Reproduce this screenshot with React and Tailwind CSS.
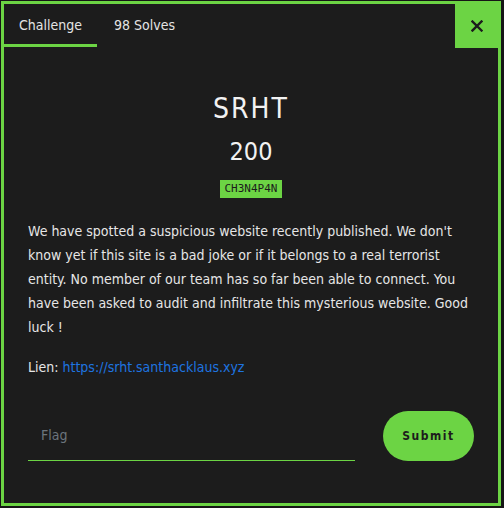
export default function App() {
  const font = { fontFamily: '"DejaVu Sans Condensed", "DejaVu Sans", sans-serif', fontStretch: "semi-condensed" };
  return (
    <div className="w-[504px] h-[508px] bg-[#161616] pl-px pt-px overflow-hidden" style={font}>
      <div className="w-[500px] h-[505px] border-[3px] border-[#6cd444] bg-[#1c1c1c] flex flex-col">
        <div className="flex h-[43px] items-stretch">
          <div className="w-[93px] border-b-[3px] border-[#6cd444] flex items-center justify-center text-[14px] text-[#e4e4e4] pt-[2px]">
            Challenge
          </div>
          <div className="ml-[10px] px-[7px] flex items-center text-[14px] text-[#e4e4e4]">98 Solves</div>
          <div className="flex-1" />
          <button className="w-[43px] h-[44px] bg-[#6cd444] flex items-center justify-center text-[#1c1c1c]">
            <svg width="12" height="12" viewBox="0 0 12 12">
              <path d="M1.5 1.5 L10.5 10.5 M10.5 1.5 L1.5 10.5" stroke="#1c1c1c" strokeWidth="2.4" strokeLinecap="square" />
            </svg>
          </button>
        </div>
        <div className="px-[24px] flex flex-col">
          <div className="mt-[44px] text-center text-[28px] leading-[36px] tracking-[2px] text-[#f2f2f2]">SRHT</div>
          <div className="mt-[8px] text-center text-[25px] leading-[34px] text-[#f2f2f2]">200</div>
          <div className="mt-[11px] flex justify-center">
            <span className="bg-[#6cd444] text-[#1c1c1c] text-[11px] leading-[18px] px-[5px] tracking-[0px]" style={{ fontFamily: '"DejaVu Sans Mono", monospace', fontStretch: "normal" }}>
              CH3N4P4N
            </span>
          </div>
          <p className="mt-[21px] text-[14px] leading-[24px] text-[#e6e6e6]">
            We have spotted a suspicious website recently published. We don't know yet if this site is a bad joke or if it belongs to a real terrorist entity. No member of our team has so far been able to connect. You have been asked to audit and infiltrate this mysterious website. Good luck !
          </p>
          <p className="mt-[16px] text-[14px] leading-[24px] text-[#e6e6e6]">
            Lien: <a className="text-[#1e74e0]" href="#">https://srht.santhacklaus.xyz</a>
          </p>
          <div className="mt-[32px] flex items-end gap-[28px]">
            <div className="w-[327px] h-[50px] border-b border-[#6cd444] flex items-center pl-[13px]">
              <span className="text-[14px] text-[#6c757d]">Flag</span>
            </div>
            <button className="w-[91px] h-[50px] shrink-0 rounded-full bg-[#6cd444] text-[#1c1c1c] font-bold text-[12px] tracking-[1.5px]">
              Submit
            </button>
          </div>
        </div>
      </div>
    </div>
  );
}
